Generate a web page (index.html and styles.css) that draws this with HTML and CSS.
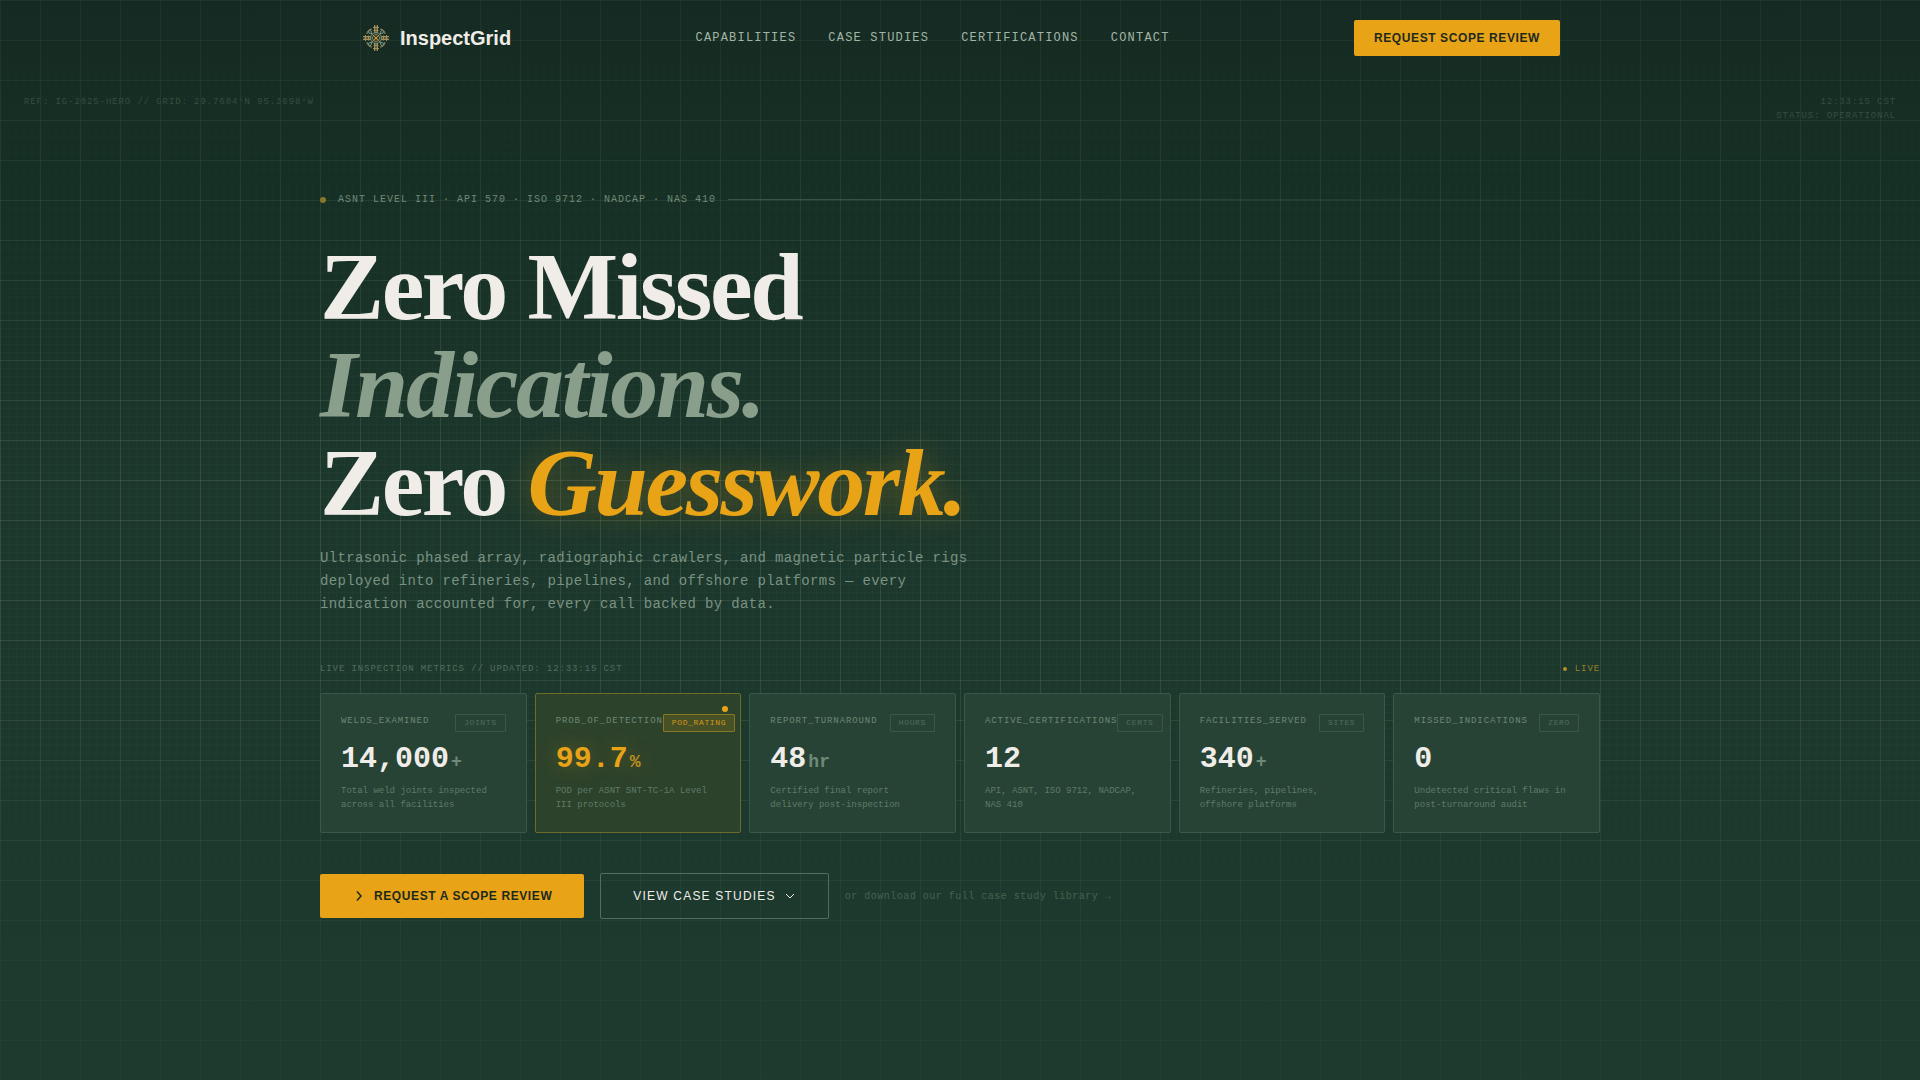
FILE: index.html
```html
<!DOCTYPE html>
<html lang="en">
<head>
    <meta charset="UTF-8">
    <meta name="viewport" content="width=device-width, initial-scale=1.0">
    <title>InspectGrid</title>
    <link rel="stylesheet" href="styles.css">
</head>
<body>
    <div class="page">
        <header class="nav">
            <a class="logo" href="#">
                <svg class="logo-mark" viewBox="0 0 32 32" fill="none" stroke="#a38d58" stroke-width="1">
                    <g id="arm">
                        <path d="M14.500 3v8M17.500 3v8M16 3.500v8M13 5.500h6M13.500 8.500h5"/>
                    </g>
                    <use href="#arm" transform="rotate(90 16 16)"/>
                    <use href="#arm" transform="rotate(180 16 16)"/>
                    <use href="#arm" transform="rotate(270 16 16)"/>
                    <g stroke="#6f9484">
                        <circle cx="10" cy="10" r="1.500"/>
                        <circle cx="22" cy="10" r="1.500"/>
                        <circle cx="10" cy="22" r="1.500"/>
                        <circle cx="22" cy="22" r="1.500"/>
                        <circle cx="16" cy="16" r="5.500"/>
                    </g>
                    <path d="M7 12a5 5 0 0 1 5-5M20 7a5 5 0 0 1 5 5M25 20a5 5 0 0 1-5 5M12 25a5 5 0 0 1-5-5"/>
                    <path d="M11 11l10 10M21 11l-10 10"/>
                    <circle cx="16" cy="16" r="3.500"/>
                    <circle cx="16" cy="16" r="1.500" fill="#c8962f" stroke="none"/>
                </svg>
                <span>InspectGrid</span>
            </a>
            <nav class="nav-links">
                <a href="#">CAPABILITIES</a>
                <a href="#">CASE STUDIES</a>
                <a href="#">CERTIFICATIONS</a>
                <a href="#">CONTACT</a>
            </nav>
            <button class="btn-nav" type="button">REQUEST SCOPE REVIEW</button>
        </header>

        <div class="meta">
            <div>REF: IG-2025-HERO // GRID: 29.7604°N 95.3698°W</div>
            <div class="meta-right">12:33:15 CST<br>STATUS: OPERATIONAL</div>
        </div>

        <main class="hero">
            <div class="eyebrow">
                <span class="dot"></span>
                <span>ASNT LEVEL III · API 570 · ISO 9712 · NADCAP · NAS 410</span>
                <span class="rule"></span>
            </div>

            <h1>Zero Missed<br><em class="muted">Indications.</em><br>Zero <em class="accent">Guesswork.</em></h1>

            <p class="lead">Ultrasonic phased array, radiographic crawlers, and magnetic particle rigs deployed into refineries, pipelines, and offshore platforms — every indication accounted for, every call backed by data.</p>

            <div class="metrics-head">
                <span>LIVE INSPECTION METRICS // UPDATED: 12:33:15 CST</span>
                <span class="live">LIVE</span>
            </div>

            <section class="metrics">
                <article class="card">
                    <div class="card-head"><span>WELDS_EXAMINED</span><span class="tag">JOINTS</span></div>
                    <div class="value">14,000<span class="unit">+</span></div>
                    <p>Total weld joints inspected across all facilities</p>
                </article>
                <article class="card highlight">
                    <div class="card-head"><span>PROB_OF_DETECTION</span><span class="tag">POD_RATING</span></div>
                    <div class="value">99.7<span class="unit">%</span></div>
                    <p>POD per ASNT SNT-TC-1A Level III protocols</p>
                </article>
                <article class="card">
                    <div class="card-head"><span>REPORT_TURNAROUND</span><span class="tag">HOURS</span></div>
                    <div class="value">48<span class="unit">hr</span></div>
                    <p>Certified final report delivery post-inspection</p>
                </article>
                <article class="card">
                    <div class="card-head"><span>ACTIVE_CERTIFICATIONS</span><span class="tag">CERTS</span></div>
                    <div class="value">12</div>
                    <p>API, ASNT, ISO 9712, NADCAP, NAS 410</p>
                </article>
                <article class="card">
                    <div class="card-head"><span>FACILITIES_SERVED</span><span class="tag">SITES</span></div>
                    <div class="value">340<span class="unit">+</span></div>
                    <p>Refineries, pipelines, offshore platforms</p>
                </article>
                <article class="card">
                    <div class="card-head"><span>MISSED_INDICATIONS</span><span class="tag">ZERO</span></div>
                    <div class="value">0</div>
                    <p>Undetected critical flaws in post-turnaround audit</p>
                </article>
            </section>

            <div class="actions">
                <button class="btn btn-primary" type="button">
                    <svg width="14" height="14" viewBox="0 0 14 14" fill="none" stroke="currentColor" stroke-width="1.5"><path d="M5 2.500l4 4.500-4 4.500"/></svg>
                    REQUEST A SCOPE REVIEW
                </button>
                <button class="btn btn-outline" type="button">
                    VIEW CASE STUDIES
                    <svg width="12" height="12" viewBox="0 0 12 12" fill="none" stroke="currentColor" stroke-width="1"><path d="M2 4l4 4 4-4"/></svg>
                </button>
                <a class="download" href="#">or download our full case study library →</a>
            </div>
        </main>
    </div>
</body>
</html>
```
FILE: styles.css
```css
* {
    box-sizing: border-box;
}

body {
    margin: 0;
    background-color: #1c382d;
    color: #f0ede8;
    font-family: "Liberation Mono", monospace;
    line-height: 1.5;
}

.page {
    position: relative;
    min-height: 100vh;
    background: linear-gradient(180deg, #152a22 0%, #162f25 15%, #1c372c 45%, #1d3a2e 100%);
}

/* inspection grid: 40px major lines, 8px minor lines */
.page::before {
    content: "";
    position: absolute;
    inset: 0;
    background-image:
        linear-gradient(rgba(138, 158, 140, 0.18) 1px, transparent 1px),
        linear-gradient(90deg, rgba(138, 158, 140, 0.18) 1px, transparent 1px),
        linear-gradient(rgba(138, 158, 140, 0.04) 1px, transparent 1px),
        linear-gradient(90deg, rgba(138, 158, 140, 0.04) 1px, transparent 1px);
    background-size: 40px 40px, 40px 40px, 8px 8px, 8px 8px;
    mask-image: linear-gradient(180deg, rgba(0, 0, 0, 0.4) 0%, rgba(0, 0, 0, 0.5) 12%, #000 45%, #000 58%, rgba(0, 0, 0, 0.3) 85%, rgba(0, 0, 0, 0.2) 100%);
    pointer-events: none;
}

a {
    color: inherit;
    text-decoration: none;
}

button {
    font-family: "Liberation Sans", Arial, sans-serif;
    font-size: 12px;
    line-height: 16px;
    border: none;
    border-radius: 2px;
    cursor: pointer;
}

.nav {
    position: relative;
    display: flex;
    align-items: center;
    justify-content: space-between;
    max-width: 1280px;
    margin: 0 auto;
    padding: 20px 40px;
}

.logo {
    display: flex;
    align-items: center;
    gap: 8px;
    font-family: "Liberation Sans", Arial, sans-serif;
    font-size: 20px;
    font-weight: bold;
}

.logo-mark {
    width: 32px;
    height: 32px;
}

.nav-links {
    display: flex;
    gap: 32px;
    font-size: 12px;
    letter-spacing: 0.1em;
    color: #a3b5a6;
}

.btn-nav {
    padding: 10px 20px;
    background-color: #e8a317;
    color: #1c2a1e;
    font-weight: bold;
    letter-spacing: 0.05em;
}

.meta {
    position: relative;
    display: flex;
    justify-content: space-between;
    padding: 19px 24px 0;
    font-size: 9px;
    line-height: 14px;
    letter-spacing: 0.1em;
    color: #34503f;
}

.meta-right {
    text-align: right;
}

.hero {
    position: relative;
    max-width: 1280px;
    margin: 0 auto;
    padding: 69px 0 80px;
}

.eyebrow {
    display: flex;
    align-items: center;
    gap: 12px;
    font-size: 10px;
    letter-spacing: 0.1em;
    color: #6f8a78;
}

.dot {
    width: 6px;
    height: 6px;
    border-radius: 50%;
    background-color: #87792b;
}

.rule {
    flex: 1;
    height: 1px;
    background: linear-gradient(90deg, #3a5849, transparent);
}

h1 {
    margin: 31px 0 15px;
    font-family: "Liberation Serif", serif;
    font-size: 96px;
    line-height: 98px;
    letter-spacing: -0.025em;
}

.muted {
    color: #8a9e8c;
}

.accent {
    color: #e8a317;
    text-shadow: 0 0 30px rgba(232, 163, 23, 0.3);
}

.lead {
    max-width: 672px;
    margin: 0 0 46px;
    font-size: 14px;
    line-height: 23px;
    letter-spacing: 0.025em;
    color: #7a9282;
}

.metrics-head {
    display: flex;
    justify-content: space-between;
    margin-bottom: 17px;
    font-size: 9px;
    line-height: 14px;
    letter-spacing: 0.1em;
    color: #4f6e5d;
}

.live {
    display: flex;
    align-items: center;
    gap: 8px;
    color: #94822b;
}

.live::before {
    content: "";
    width: 4px;
    height: 4px;
    border-radius: 50%;
    background-color: #b3922a;
}

.metrics {
    display: grid;
    grid-template-columns: repeat(6, minmax(0, 1fr));
    gap: 8px;
}

.card {
    position: relative;
    padding: 20px;
    border: 1px solid #3a5848;
    border-radius: 2px;
    background-color: #274335;
}

.card-head {
    display: flex;
    align-items: flex-start;
    justify-content: space-between;
    margin-bottom: 12px;
    font-size: 9px;
    line-height: 14px;
    letter-spacing: 0.1em;
    white-space: nowrap;
    color: #6c8876;
}

.tag {
    padding: 2px 8px;
    border: 1px solid #3a5848;
    border-radius: 1px;
    font-size: 8px;
    line-height: 12px;
    letter-spacing: 0.08em;
    color: #4f6e5d;
}

.value {
    margin-bottom: 10px;
    font-size: 30px;
    font-weight: bold;
    line-height: 30px;
}

.unit {
    margin-left: 2px;
    font-size: 18px;
    line-height: 18px;
    color: #6f8a78;
}

.card p {
    margin: 0;
    font-size: 9px;
    line-height: 14px;
    color: #5d7b69;
}

.highlight {
    border-color: #6d6a2c;
    background-color: #2d422b;
}

.highlight::after {
    content: "";
    position: absolute;
    top: 12px;
    right: 12px;
    width: 6px;
    height: 6px;
    border-radius: 50%;
    background-color: #e8a317;
}

.highlight .tag {
    border-color: #857726;
    background-color: #485026;
    color: #d29a1b;
}

.highlight .value {
    color: #e8a317;
    text-shadow: 0 0 20px rgba(232, 163, 23, 0.3);
}

.highlight .unit {
    color: #c08f20;
}

.actions {
    display: flex;
    align-items: center;
    gap: 16px;
    margin-top: 40px;
}

.btn {
    display: flex;
    align-items: center;
    gap: 8px;
    padding: 14px 32px;
}

.btn-primary {
    background-color: #e8a317;
    color: #1c2a1e;
    font-weight: bold;
    letter-spacing: 0.05em;
}

.btn-outline {
    border: 1px solid #4f6f5e;
    background-color: transparent;
    color: #f0ede8;
    letter-spacing: 0.1em;
}

.download {
    font-size: 10px;
    letter-spacing: 0.05em;
    color: #45624f;
}
```
